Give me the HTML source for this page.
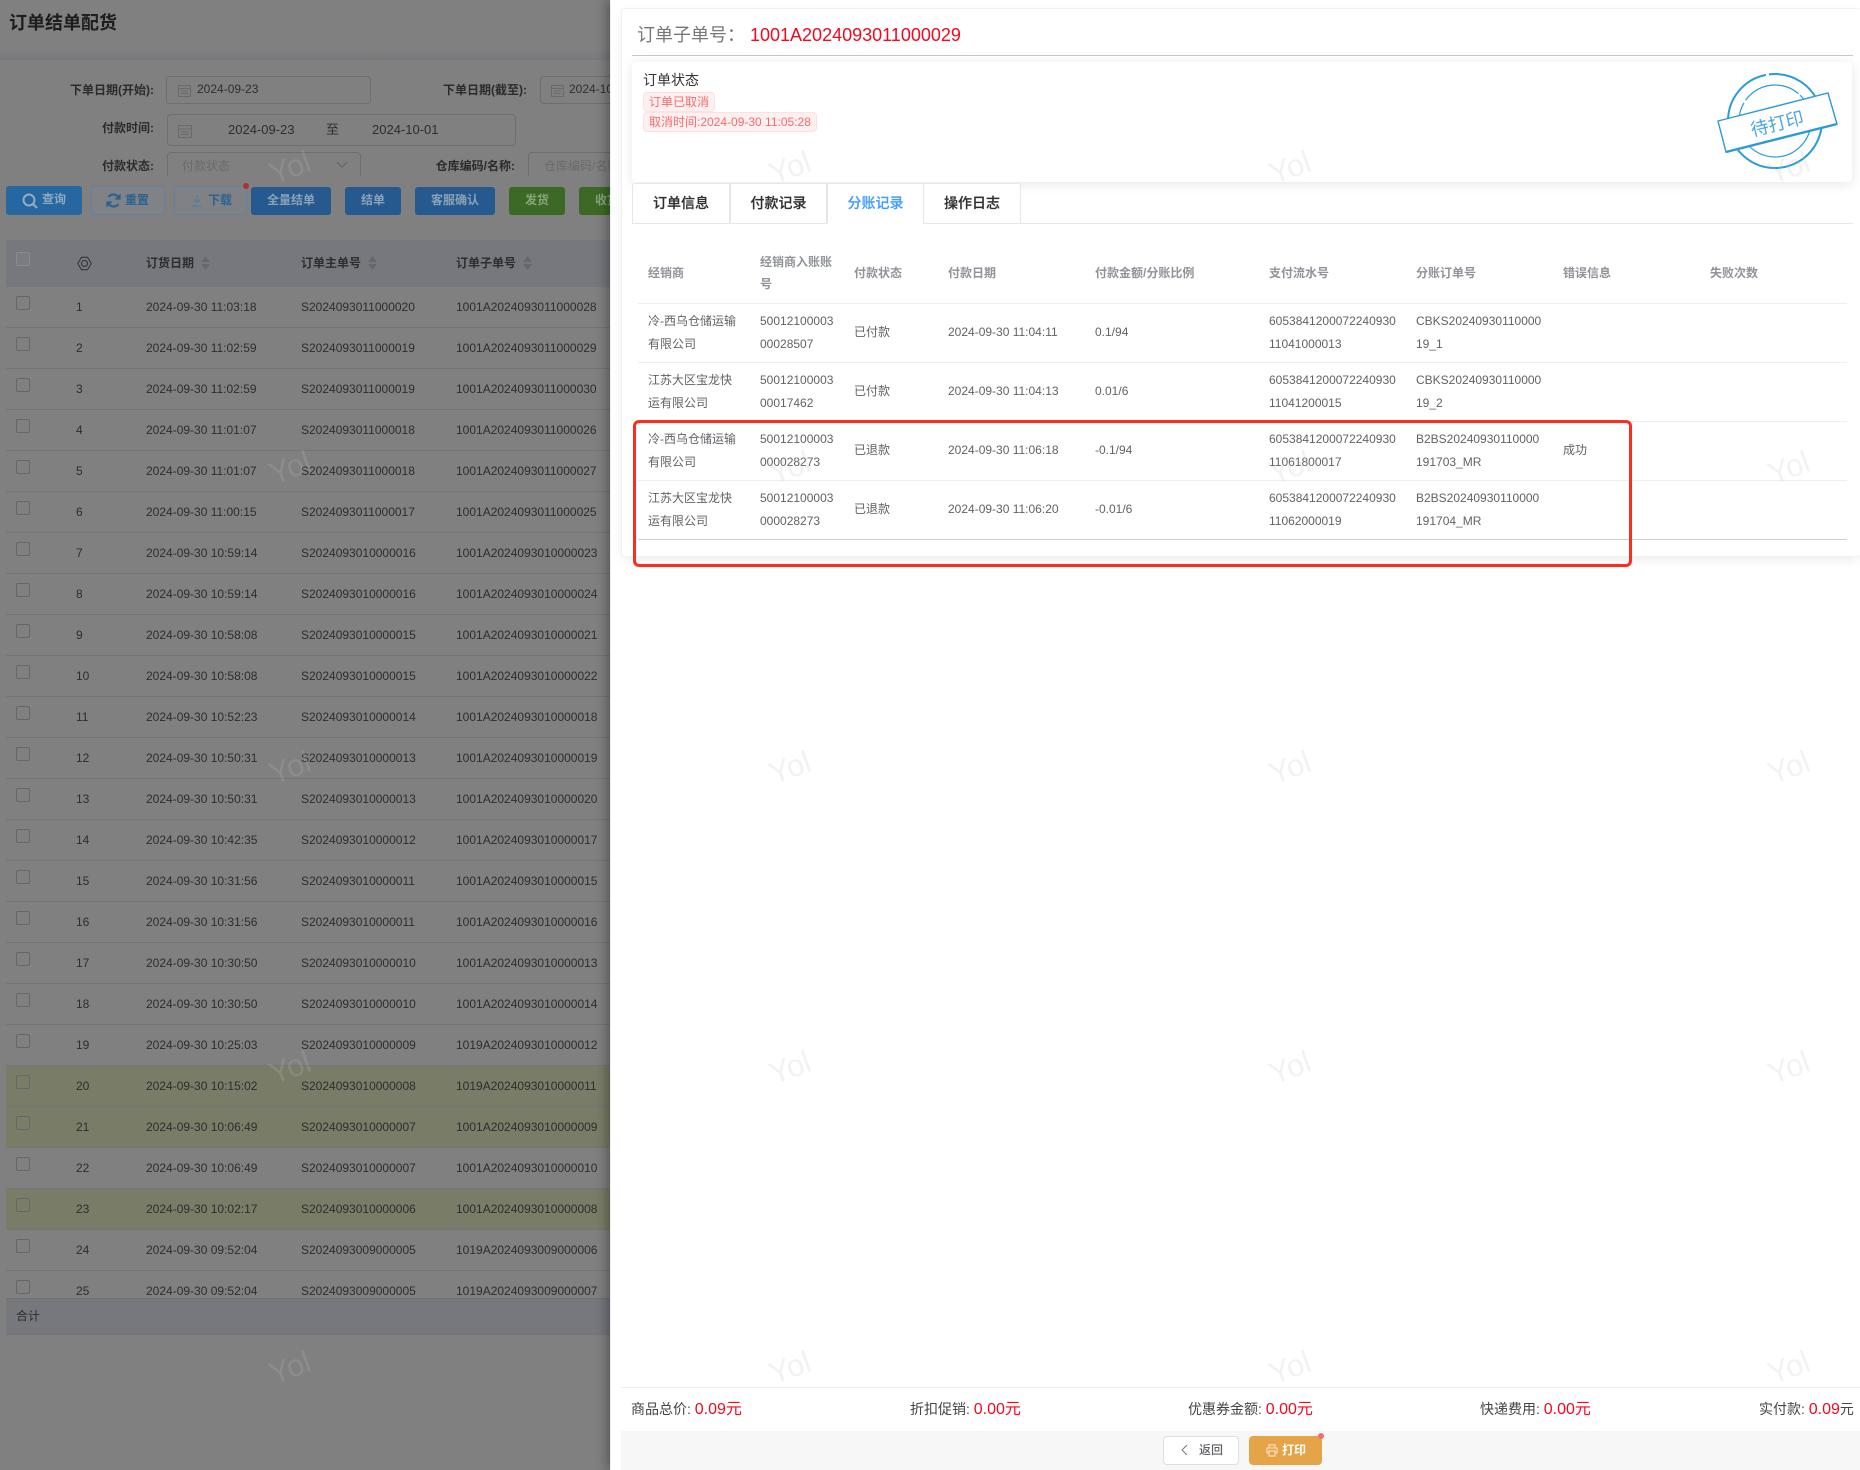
<!DOCTYPE html>
<html lang="zh-CN">
<head>
<meta charset="utf-8">
<title>订单结单配货</title>
<style>
html,body{margin:0;padding:0}
body{width:1860px;height:1470px;position:relative;overflow:hidden;background:#808080;font:12px/20px "Liberation Sans","Noto Sans CJK SC",sans-serif;color:#2c2c2c}
*{box-sizing:border-box}
.t{position:absolute;white-space:nowrap;line-height:20px}
.a{position:absolute}
#left{position:absolute;left:0;top:0;width:610px;height:1470px;overflow:hidden;background:#808080;filter:blur(.35px)}
.lb{font-weight:bold;color:#2b2b2b;text-align:right}
.inp{position:absolute;border:1px solid #6d6e71;border-radius:4px}
.btn{position:absolute;top:186px;height:29px;border-radius:3px;text-align:center;line-height:27px;font-weight:bold;font-size:12px;white-space:nowrap}
.bl{background:#265a8e;color:#8ba2b8;top:187px;height:28px}
.gr{background:#3c6a26;color:#8aa37b;top:187px;height:28px}
.ol{background:#808285;border:1px solid #6080a4;color:#2a6295}
#body{position:absolute;left:6px;top:287px;width:604px;height:1011px;overflow:hidden}
.r{position:absolute;left:0;width:604px;height:41px;border-bottom:1px solid #747578;color:#2d2d2d}
.r.g{background:#797d67}
.r i{position:absolute;left:10px;top:9px;width:14px;height:14px;border:1px solid #666769;border-radius:2px}
.r span{position:absolute;top:10px;white-space:nowrap;line-height:20px}
.r .n{left:70px}.r .d{left:140px}.r .m{left:295px}.r .s{left:450px}
#drawer{position:absolute;left:610px;top:0;width:1250px;height:1470px;background:#fff;border-left:1px solid #eceef6;box-shadow:-4px 0 10px rgba(0,0,0,.3)}
.bd{position:absolute;left:621px;top:8px;width:1239px;height:549px;background:#fff;border:1px solid #eff0f5;border-right:0;border-radius:3px;box-shadow:0 4px 12px -2px rgba(0,0,0,.09)}
.tag{position:absolute;left:643px;height:20px;line-height:18px;background:#fef0f0;border:1px solid #fde2e2;border-radius:4px;color:#f56c6c;padding:0 5px;white-space:nowrap}
.tab{position:absolute;top:183px;height:41px;width:97px;text-align:center;line-height:38px;font-size:14px;font-weight:500;color:#303133;border:1px solid #e4e7ed;background:#fff;-webkit-text-stroke:.2px #303133}
.th{color:#909399;font-weight:bold}
.td{color:#606266}
.line{position:absolute;left:638px;width:1209px;height:1px;background:#ebeef5}
.sum{font-size:14px;color:#444;white-space:nowrap;position:absolute;top:1399px;line-height:20px}
.red{color:#f5071d;font-size:16px}
.wm{position:absolute;width:70px;height:40px;line-height:40px;text-align:center;font-size:31px;color:rgba(190,190,190,.2);transform:rotate(-20deg);font-family:"Liberation Sans",sans-serif;z-index:50}
</style>
</head>
<body>
<div id="left">
  <div class="a" style="left:0;top:0;width:610px;height:60px;background:linear-gradient(#808080 0,#808080 50px,#76797c 60px)"></div>
  <div class="t" style="left:9px;top:12px;font-size:18px;font-weight:bold;line-height:22px;color:#1d1d1d">订单结单配货</div>

  <div class="t lb" style="right:456px;top:80px">下单日期(开始):</div>
  <div class="inp" style="left:166px;top:76px;width:205px;height:28px"></div>
  <svg class="a" style="left:178px;top:84px" width="13" height="13" viewBox="0 0 13 13" fill="none" stroke="#696a6c"><rect x=".5" y="1.5" width="12" height="11"/><path d="M.5 4.5h12M3 7h7M3 9.5h7"/></svg>
  <div class="t" style="left:197px;top:79px;color:#2e2e2e">2024-09-23</div>
  <div class="t lb" style="right:83px;top:80px">下单日期(截至):</div>
  <div class="inp" style="left:540px;top:76px;width:100px;height:28px"></div>
  <svg class="a" style="left:551px;top:84px" width="13" height="13" viewBox="0 0 13 13" fill="none" stroke="#696a6c"><rect x=".5" y="1.5" width="12" height="11"/><path d="M.5 4.5h12M3 7h7M3 9.5h7"/></svg>
  <div class="t" style="left:569px;top:79px;color:#2e2e2e">2024-10-01</div>

  <div class="t lb" style="right:456px;top:118px">付款时间:</div>
  <div class="inp" style="left:167px;top:114px;width:349px;height:32px"></div>
  <svg class="a" style="left:178px;top:124px" width="14" height="14" viewBox="0 0 14 14" fill="none" stroke="#696a6c"><rect x=".5" y="1.5" width="13" height="12"/><path d="M.5 5h13M3 8h8M3 10.5h8"/></svg>
  <div class="t" style="left:228px;top:120px;color:#2e2e2e;font-size:13px">2024-09-23</div>
  <div class="t" style="left:326px;top:120px;color:#2e2e2e;font-size:13px">至</div>
  <div class="t" style="left:372px;top:120px;color:#2e2e2e;font-size:13px">2024-10-01</div>

  <div class="a" style="left:0;top:145px;width:610px;height:31px;overflow:hidden">
    <div class="t lb" style="right:456px;top:11px">付款状态:</div>
    <div class="inp" style="left:167px;top:7px;width:194px;height:40px"></div>
    <div class="t" style="left:182px;top:11px;color:#6a6a6a">付款状态</div>
    <svg class="a" style="left:336px;top:16px" width="12" height="8" viewBox="0 0 12 8" fill="none" stroke="#646567"><path d="M1 1l5 5 5-5"/></svg>
    <div class="t lb" style="right:95px;top:11px">仓库编码/名称:</div>
    <div class="inp" style="left:528px;top:7px;width:100px;height:40px"></div>
    <div class="t" style="left:544px;top:11px;color:#6a6a6a">仓库编码/名称</div>
  </div>

  <div class="btn" style="left:6px;width:76px;background:#27679f;color:#8ea9c2;padding-left:20px">查询</div>
  <svg class="a" style="left:22px;top:193px" width="16" height="16" viewBox="0 0 16 16" fill="none" stroke="#95abc0" stroke-width="2"><circle cx="7" cy="7" r="5.5"/><path d="M11 11l4 4"/></svg>
  <div class="btn ol" style="left:91px;width:74px;padding-left:18px">重置</div>
  <svg class="a" style="left:106px;top:193px" width="15" height="15" viewBox="0 0 15 15" fill="none" stroke="#2a6295" stroke-width="2.2"><path d="M13 5.500A6 6 0 0 0 2.500 4M2 9.500A6 6 0 0 0 12.500 11"/><path d="M14 1v5H9M1 14V9h5" stroke-width="1.200" fill="#2a6295"/></svg>
  <div class="btn ol" style="left:174px;width:73px;padding-left:19px;background:#808184">下载</div>
  <svg class="a" style="left:191px;top:194px" width="12" height="13" viewBox="0 0 12 13" fill="none" stroke="#4c7aa8"><path d="M6 1v7M3 5.500L6 8.500 9 5.500M1 12h10"/></svg>
  <div class="a" style="left:243px;top:183px;width:6px;height:6px;border-radius:50%;background:#a73337"></div>
  <div class="btn bl" style="left:251px;width:80px">全量结单</div>
  <div class="btn bl" style="left:345px;width:56px">结单</div>
  <div class="btn bl" style="left:415px;width:80px">客服确认</div>
  <div class="btn gr" style="left:509px;width:56px">发货</div>
  <div class="btn gr" style="left:579px;width:56px">收货</div>

  <div class="a" style="left:6px;top:240px;width:604px;height:47px;background:#76787e"></div>
  <i class="a" style="left:16px;top:252px;width:14px;height:14px;border:1px solid #8a8b8e;border-radius:2px;background:#7a7c81"></i>
  <svg class="a" style="left:77px;top:256px" width="15" height="15" viewBox="0 0 15 15" fill="none" stroke="#2f3033" stroke-width="1" stroke-linejoin="round"><path d="M4.500 1.200h6L14.300 7.500 10.500 13.800h-6L.7 7.500z"/><circle cx="7.500" cy="7.500" r="3"/></svg>
  <div class="t" style="left:146px;top:253px;font-weight:bold;color:#2d2d2f">订货日期</div>
  <svg class="a" style="left:201px;top:256px" width="9" height="14" fill="#66676c"><path d="M4.500 0L9 6H0zM0 8h9l-4.500 6z"/></svg>
  <div class="t" style="left:301px;top:253px;font-weight:bold;color:#2d2d2f">订单主单号</div>
  <svg class="a" style="left:368px;top:256px" width="9" height="14" fill="#66676c"><path d="M4.500 0L9 6H0zM0 8h9l-4.500 6z"/></svg>
  <div class="t" style="left:456px;top:253px;font-weight:bold;color:#2d2d2f">订单子单号</div>
  <svg class="a" style="left:523px;top:256px" width="9" height="14" fill="#66676c"><path d="M4.500 0L9 6H0zM0 8h9l-4.500 6z"/></svg>

  <div id="body">
    <div class="r" style="top:0"><i></i><span class="n">1</span><span class="d">2024-09-30 11:03:18</span><span class="m">S2024093011000020</span><span class="s">1001A2024093011000028</span></div>
    <div class="r" style="top:41px"><i></i><span class="n">2</span><span class="d">2024-09-30 11:02:59</span><span class="m">S2024093011000019</span><span class="s">1001A2024093011000029</span></div>
    <div class="r" style="top:82px"><i></i><span class="n">3</span><span class="d">2024-09-30 11:02:59</span><span class="m">S2024093011000019</span><span class="s">1001A2024093011000030</span></div>
    <div class="r" style="top:123px"><i></i><span class="n">4</span><span class="d">2024-09-30 11:01:07</span><span class="m">S2024093011000018</span><span class="s">1001A2024093011000026</span></div>
    <div class="r" style="top:164px"><i></i><span class="n">5</span><span class="d">2024-09-30 11:01:07</span><span class="m">S2024093011000018</span><span class="s">1001A2024093011000027</span></div>
    <div class="r" style="top:205px"><i></i><span class="n">6</span><span class="d">2024-09-30 11:00:15</span><span class="m">S2024093011000017</span><span class="s">1001A2024093011000025</span></div>
    <div class="r" style="top:246px"><i></i><span class="n">7</span><span class="d">2024-09-30 10:59:14</span><span class="m">S2024093010000016</span><span class="s">1001A2024093010000023</span></div>
    <div class="r" style="top:287px"><i></i><span class="n">8</span><span class="d">2024-09-30 10:59:14</span><span class="m">S2024093010000016</span><span class="s">1001A2024093010000024</span></div>
    <div class="r" style="top:328px"><i></i><span class="n">9</span><span class="d">2024-09-30 10:58:08</span><span class="m">S2024093010000015</span><span class="s">1001A2024093010000021</span></div>
    <div class="r" style="top:369px"><i></i><span class="n">10</span><span class="d">2024-09-30 10:58:08</span><span class="m">S2024093010000015</span><span class="s">1001A2024093010000022</span></div>
    <div class="r" style="top:410px"><i></i><span class="n">11</span><span class="d">2024-09-30 10:52:23</span><span class="m">S2024093010000014</span><span class="s">1001A2024093010000018</span></div>
    <div class="r" style="top:451px"><i></i><span class="n">12</span><span class="d">2024-09-30 10:50:31</span><span class="m">S2024093010000013</span><span class="s">1001A2024093010000019</span></div>
    <div class="r" style="top:492px"><i></i><span class="n">13</span><span class="d">2024-09-30 10:50:31</span><span class="m">S2024093010000013</span><span class="s">1001A2024093010000020</span></div>
    <div class="r" style="top:533px"><i></i><span class="n">14</span><span class="d">2024-09-30 10:42:35</span><span class="m">S2024093010000012</span><span class="s">1001A2024093010000017</span></div>
    <div class="r" style="top:574px"><i></i><span class="n">15</span><span class="d">2024-09-30 10:31:56</span><span class="m">S2024093010000011</span><span class="s">1001A2024093010000015</span></div>
    <div class="r" style="top:615px"><i></i><span class="n">16</span><span class="d">2024-09-30 10:31:56</span><span class="m">S2024093010000011</span><span class="s">1001A2024093010000016</span></div>
    <div class="r" style="top:656px"><i></i><span class="n">17</span><span class="d">2024-09-30 10:30:50</span><span class="m">S2024093010000010</span><span class="s">1001A2024093010000013</span></div>
    <div class="r" style="top:697px"><i></i><span class="n">18</span><span class="d">2024-09-30 10:30:50</span><span class="m">S2024093010000010</span><span class="s">1001A2024093010000014</span></div>
    <div class="r" style="top:738px"><i></i><span class="n">19</span><span class="d">2024-09-30 10:25:03</span><span class="m">S2024093010000009</span><span class="s">1019A2024093010000012</span></div>
    <div class="r g" style="top:779px"><i></i><span class="n">20</span><span class="d">2024-09-30 10:15:02</span><span class="m">S2024093010000008</span><span class="s">1019A2024093010000011</span></div>
    <div class="r g" style="top:820px"><i></i><span class="n">21</span><span class="d">2024-09-30 10:06:49</span><span class="m">S2024093010000007</span><span class="s">1001A2024093010000009</span></div>
    <div class="r" style="top:861px"><i></i><span class="n">22</span><span class="d">2024-09-30 10:06:49</span><span class="m">S2024093010000007</span><span class="s">1001A2024093010000010</span></div>
    <div class="r g" style="top:902px"><i></i><span class="n">23</span><span class="d">2024-09-30 10:02:17</span><span class="m">S2024093010000006</span><span class="s">1001A2024093010000008</span></div>
    <div class="r" style="top:943px"><i></i><span class="n">24</span><span class="d">2024-09-30 09:52:04</span><span class="m">S2024093009000005</span><span class="s">1019A2024093009000006</span></div>
    <div class="r" style="top:984px"><i></i><span class="n">25</span><span class="d">2024-09-30 09:52:04</span><span class="m">S2024093009000005</span><span class="s">1019A2024093009000007</span></div>
  </div>
  <div class="a" style="left:6px;top:1298px;width:604px;height:37px;background:#76787e;border-top:1px solid #707175;border-bottom:1px solid #727377"></div>
  <div class="t" style="left:16px;top:1306px;color:#2c2c2c">合计</div>
</div>

<div id="drawer"></div>
<div class="bd"></div>
<div class="t" style="left:637px;top:24px;font-size:18px;line-height:22px;color:#777">订单子单号：</div>
<div class="t" style="left:750px;top:24px;font-size:18px;line-height:22px;color:#f5071d">1001A2024093011000029</div>
<div class="a" style="left:632px;top:55px;width:1221px;height:1px;background:#c3c8d2"></div>

<div class="a" style="left:632px;top:62px;width:1220px;height:120px;background:#fff;border-radius:4px;box-shadow:0 2px 12px rgba(0,0,0,.1)"></div>
<div class="t" style="left:643px;top:70px;font-size:14px;color:#333">订单状态</div>
<div class="tag" style="top:92px">订单已取消</div>
<div class="tag" style="top:112px">取消时间:2024-09-30 11:05:28</div>

<svg class="a" style="left:1710px;top:60px" width="140" height="120" viewBox="1710 60 140 120" fill="none" stroke="#2a9bd8">
  <circle cx="1775" cy="121" r="47" stroke-width="2" stroke-dasharray="140 2 70 3 60 2"/>
  <circle cx="1775" cy="121" r="36" stroke-width="1.200" stroke-dasharray="90 2 40 3 60 2"/>
  <path d="M1718 121L1828 93L1837 124L1726 152Z" fill="#fff" stroke-width="1.400"/>
  <path d="M1726 152L1837 124" stroke-width="2.400"/>
  <text x="1777" y="130" transform="rotate(-14 1777 123)" text-anchor="middle" fill="#4aa6e0" stroke="none" font-size="18" font-family="'Liberation Sans','Noto Sans CJK SC',sans-serif">待打印</text>
</svg>

<div class="a" style="left:632px;top:223px;width:1221px;height:1px;background:#e4e7ed"></div>
<div class="tab" style="left:632px;width:98px;border-radius:3px 0 0 0">订单信息</div>
<div class="tab" style="left:730px">付款记录</div>
<div class="tab" style="left:827px;color:#409eff;-webkit-text-stroke:.2px #409eff;border-bottom-color:#fff">分账记录</div>
<div class="tab" style="left:923px;width:98px;border-radius:0 3px 0 0">操作日志</div>

<div class="t th" style="left:648px;top:263px">经销商</div>
<div class="t th" style="left:760px;top:252px">经销商入账账</div>
<div class="t th" style="left:760px;top:274px">号</div>
<div class="t th" style="left:854px;top:263px">付款状态</div>
<div class="t th" style="left:948px;top:263px">付款日期</div>
<div class="t th" style="left:1095px;top:263px">付款金额/分账比例</div>
<div class="t th" style="left:1269px;top:263px">支付流水号</div>
<div class="t th" style="left:1416px;top:263px">分账订单号</div>
<div class="t th" style="left:1563px;top:263px">错误信息</div>
<div class="t th" style="left:1710px;top:263px">失败次数</div>

<div class="line" style="top:303px"></div>
<div class="line" style="top:362px"></div>
<div class="line" style="top:421px"></div>
<div class="line" style="top:480px"></div>
<div class="line" style="top:539px;background:#cfd1d6"></div>

<div class="t td" style="left:648px;top:311px">冷-西乌仓储运输</div>
<div class="t td" style="left:648px;top:334px">有限公司</div>
<div class="t td" style="left:760px;top:311px">50012100003</div>
<div class="t td" style="left:760px;top:334px">00028507</div>
<div class="t td" style="left:854px;top:322px">已付款</div>
<div class="t td" style="left:948px;top:322px">2024-09-30 11:04:11</div>
<div class="t td" style="left:1095px;top:322px">0.1/94</div>
<div class="t td" style="left:1269px;top:311px">6053841200072240930</div>
<div class="t td" style="left:1269px;top:334px">11041000013</div>
<div class="t td" style="left:1416px;top:311px">CBKS20240930110000</div>
<div class="t td" style="left:1416px;top:334px">19_1</div>

<div class="t td" style="left:648px;top:370px">江苏大区宝龙快</div>
<div class="t td" style="left:648px;top:393px">运有限公司</div>
<div class="t td" style="left:760px;top:370px">50012100003</div>
<div class="t td" style="left:760px;top:393px">00017462</div>
<div class="t td" style="left:854px;top:381px">已付款</div>
<div class="t td" style="left:948px;top:381px">2024-09-30 11:04:13</div>
<div class="t td" style="left:1095px;top:381px">0.01/6</div>
<div class="t td" style="left:1269px;top:370px">6053841200072240930</div>
<div class="t td" style="left:1269px;top:393px">11041200015</div>
<div class="t td" style="left:1416px;top:370px">CBKS20240930110000</div>
<div class="t td" style="left:1416px;top:393px">19_2</div>

<div class="t td" style="left:648px;top:429px">冷-西乌仓储运输</div>
<div class="t td" style="left:648px;top:452px">有限公司</div>
<div class="t td" style="left:760px;top:429px">50012100003</div>
<div class="t td" style="left:760px;top:452px">000028273</div>
<div class="t td" style="left:854px;top:440px">已退款</div>
<div class="t td" style="left:948px;top:440px">2024-09-30 11:06:18</div>
<div class="t td" style="left:1095px;top:440px">-0.1/94</div>
<div class="t td" style="left:1269px;top:429px">6053841200072240930</div>
<div class="t td" style="left:1269px;top:452px">11061800017</div>
<div class="t td" style="left:1416px;top:429px">B2BS20240930110000</div>
<div class="t td" style="left:1416px;top:452px">191703_MR</div>
<div class="t td" style="left:1563px;top:440px">成功</div>

<div class="t td" style="left:648px;top:488px">江苏大区宝龙快</div>
<div class="t td" style="left:648px;top:511px">运有限公司</div>
<div class="t td" style="left:760px;top:488px">50012100003</div>
<div class="t td" style="left:760px;top:511px">000028273</div>
<div class="t td" style="left:854px;top:499px">已退款</div>
<div class="t td" style="left:948px;top:499px">2024-09-30 11:06:20</div>
<div class="t td" style="left:1095px;top:499px">-0.01/6</div>
<div class="t td" style="left:1269px;top:488px">6053841200072240930</div>
<div class="t td" style="left:1269px;top:511px">11062000019</div>
<div class="t td" style="left:1416px;top:488px">B2BS20240930110000</div>
<div class="t td" style="left:1416px;top:511px">191704_MR</div>

<div class="a" style="left:633px;top:420px;width:999px;height:147px;border:3px solid #fb2d20;border-radius:6px;z-index:10"></div>

<div class="a" style="left:621px;top:1387px;width:1239px;height:1px;background:#ebedf0"></div>
<div class="sum" style="left:631px">商品总价: <span class="red">0.09元</span></div>
<div class="sum" style="left:910px">折扣促销: <span class="red">0.00元</span></div>
<div class="sum" style="left:1188px">优惠券金额: <span class="red">0.00元</span></div>
<div class="sum" style="left:1480px">快递费用: <span class="red">0.00元</span></div>
<div class="sum" style="left:1759px">实付款: <span class="red">0.09</span>元</div>

<div class="a" style="left:621px;top:1431px;width:1239px;height:39px;background:#f7f7f7"></div>
<div class="a" style="left:1163px;top:1436px;width:76px;height:29px;background:#fff;border:1px solid #dcdfe6;border-radius:4px"></div>
<svg class="a" style="left:1181px;top:1444px" width="7" height="12" viewBox="0 0 7 12" fill="none" stroke="#777"><path d="M6 1L1 6l5 5"/></svg>
<div class="t" style="left:1199px;top:1440px;color:#606266;font-weight:500">返回</div>
<div class="a" style="left:1249px;top:1436px;width:73px;height:29px;background:#e6a449;border-radius:4px"></div>
<svg class="a" style="left:1266px;top:1444px" width="12" height="13" viewBox="0 0 12 13" fill="none" stroke="#fbe8cc"><path d="M3 4V1h6v3M3 9H1V4h10v5H9M3 7h6v5H3z"/></svg>
<div class="t" style="left:1282px;top:1440px;color:#fff;font-weight:bold">打印</div>
<div class="a" style="left:1318px;top:1433px;width:6px;height:6px;border-radius:50%;background:#f56c6c"></div>

<div class="wm" style="left:255px;top:148px">Yol</div>
<div class="wm" style="left:255px;top:448px">Yol</div>
<div class="wm" style="left:255px;top:748px">Yol</div>
<div class="wm" style="left:255px;top:1048px">Yol</div>
<div class="wm" style="left:255px;top:1348px">Yol</div>
<div class="wm" style="left:755px;top:148px">Yol</div>
<div class="wm" style="left:755px;top:448px">Yol</div>
<div class="wm" style="left:755px;top:748px">Yol</div>
<div class="wm" style="left:755px;top:1048px">Yol</div>
<div class="wm" style="left:755px;top:1348px">Yol</div>
<div class="wm" style="left:1255px;top:148px">Yol</div>
<div class="wm" style="left:1255px;top:448px">Yol</div>
<div class="wm" style="left:1255px;top:748px">Yol</div>
<div class="wm" style="left:1255px;top:1048px">Yol</div>
<div class="wm" style="left:1255px;top:1348px">Yol</div>
<div class="wm" style="left:1754px;top:148px">Yol</div>
<div class="wm" style="left:1754px;top:448px">Yol</div>
<div class="wm" style="left:1754px;top:748px">Yol</div>
<div class="wm" style="left:1754px;top:1048px">Yol</div>
<div class="wm" style="left:1754px;top:1348px">Yol</div>
</body>
</html>
